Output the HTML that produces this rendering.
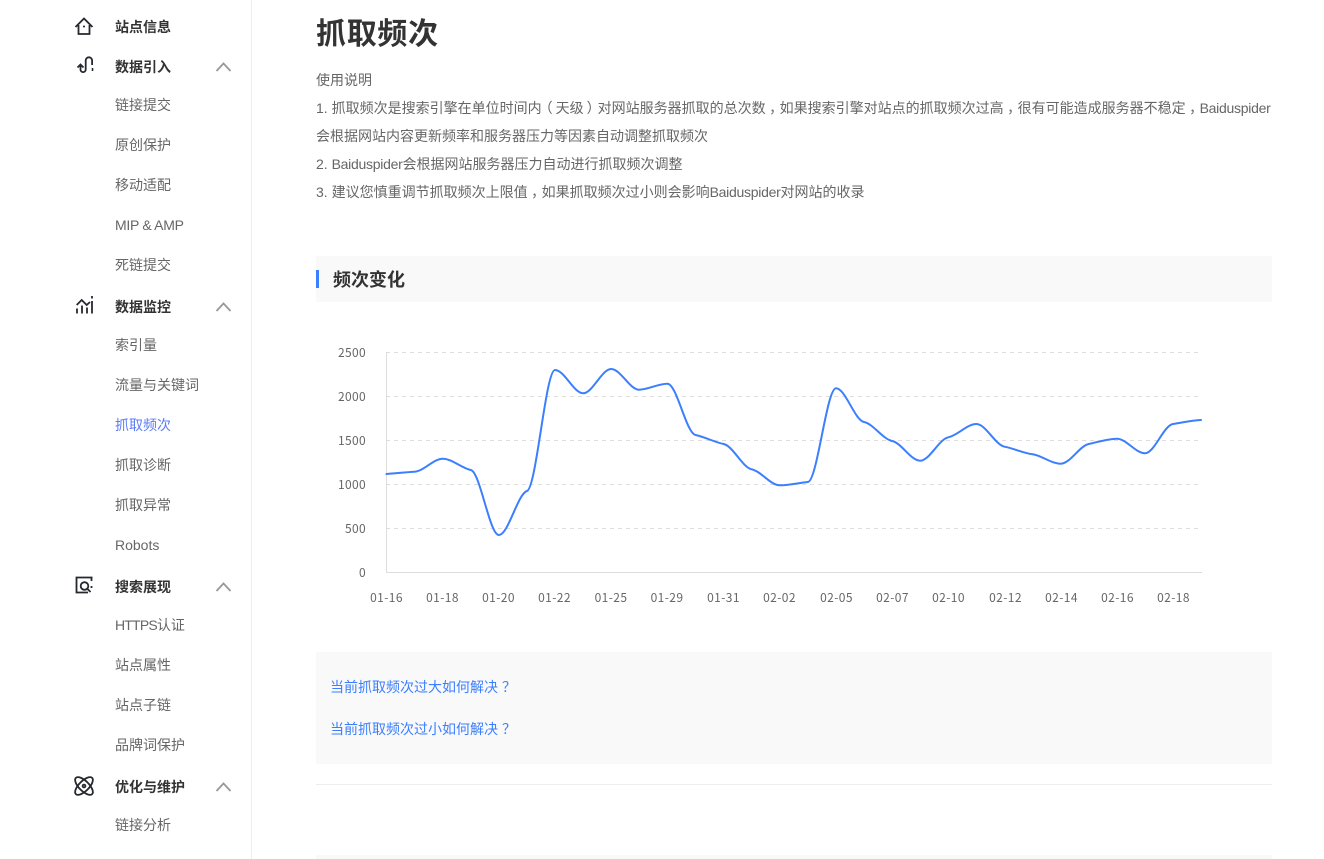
<!DOCTYPE html>
<html lang="zh">
<head>
<meta charset="utf-8">
<title>抓取频次</title>
<style>
html,body{margin:0;padding:0;background:#fff;}
body{width:1324px;height:859px;position:relative;overflow:hidden;font-family:"Liberation Sans","Noto Sans CJK SC",sans-serif;font-size:14px;color:#666;}
.a{position:absolute;white-space:nowrap;line-height:20px;}
.h{left:115px;color:#333;font-weight:bold;font-size:14px;}
.s{left:115px;color:#666;}
.d{left:316px;color:#666;}
.c{position:relative;left:3.5px;}
.q{position:relative;left:4px;}
.o{position:relative;left:-3px;}
.e{position:relative;left:3px;}
.b{letter-spacing:-.27px;}
svg{position:absolute;left:0;top:0;}
</style>
</head>
<body>
<div class="a" style="left:251px;top:0;width:1px;height:859px;background:#eee"></div>

<div class="a h" style="top:17px">站点信息</div>
<div class="a h" style="top:57px">数据引入</div>
<div class="a s" style="top:95px">链接提交</div>
<div class="a s" style="top:135px">原创保护</div>
<div class="a s" style="top:175px">移动适配</div>
<div class="a s" style="top:215px;letter-spacing:-.3px">MIP &amp; AMP</div>
<div class="a s" style="top:255px">死链提交</div>
<div class="a h" style="top:297px">数据监控</div>
<div class="a s" style="top:335px">索引量</div>
<div class="a s" style="top:375px">流量与关键词</div>
<div class="a s" style="top:415px;color:#5b7cf5">抓取频次</div>
<div class="a s" style="top:455px">抓取诊断</div>
<div class="a s" style="top:495px">抓取异常</div>
<div class="a s" style="top:535px">Robots</div>
<div class="a h" style="top:577px">搜索展现</div>
<div class="a s" style="top:615px"><span style="letter-spacing:-.8px">HTTPS</span>认证</div>
<div class="a s" style="top:655px">站点属性</div>
<div class="a s" style="top:695px">站点子链</div>
<div class="a s" style="top:735px">品牌词保护</div>
<div class="a h" style="top:777px">优化与维护</div>
<div class="a s" style="top:815px">链接分析</div>

<svg width="300" height="859" viewBox="0 0 300 859" fill="none">
  <g stroke="#26282f" stroke-width="1.8" fill="none">
    <path d="M75.5 27L84 18.5L92.5 27M78.5 25V34H89.5V25"/>
    <path d="M83 26.5h2" stroke-width="1.6"/>
    <path d="M77.5 67.5l3-3 3 3M80.5 65v4.5a2.6 2.6 0 0 0 5.2 0V60.5a3.2 3.2 0 0 1 6.4 0V65"/>
    <path d="M92.5 68v3" stroke-width="1.6"/>
    <path d="M76.7 305L81.7 300L86.7 305L90 302"/>
    <path d="M77 308.5v5M82 305.5v8M87 307.5v6M92 301v12.5M92 296v2.5"/>
    <path d="M92.5 577.5H76.5V592.5H88M91.5 577.5v3.5M91.5 586v2"/>
    <circle cx="84.5" cy="586" r="3.8"/>
    <path d="M87.5 589l3 3"/>
    <ellipse cx="84" cy="786" rx="11.5" ry="5" transform="rotate(45 84 786)"/>
    <ellipse cx="84" cy="786" rx="11.5" ry="5" transform="rotate(-45 84 786)"/>
    <circle cx="84" cy="786" r="1.4"/>
  </g>
  <g stroke="#999" stroke-width="1.8" fill="none">
    <path d="M216.5 71L223.5 63.5L230.5 71"/>
    <path d="M216.5 311L223.5 303.5L230.5 311"/>
    <path d="M216.5 591L223.5 583.5L230.5 591"/>
    <path d="M216.5 791L223.5 783.5L230.5 791"/>
  </g>
</svg>

<div class="a" style="left:316px;top:15px;font-size:30px;line-height:40px;font-weight:bold;color:#333;letter-spacing:.7px">抓取频次</div>
<div class="a d" style="top:70px">使用说明</div>
<div class="a d" style="top:98px">1. 抓取频次是搜索引擎在单位时间内<span class="o">（</span>天级<span class="e">）</span>对网站服务器抓取的总次数<span class="c">，</span>如果搜索引擎对站点的抓取频次过高<span class="c">，</span>很有可能造成服务器不稳定<span class="c">，</span><span class="b">Baiduspider</span></div>
<div class="a d" style="top:126px">会根据网站内容更新频率和服务器压力等因素自动调整抓取频次</div>
<div class="a d" style="top:154px">2. <span class="b">Baiduspider</span>会根据网站服务器压力自动进行抓取频次调整</div>
<div class="a d" style="top:182px">3. 建议您慎重调节抓取频次上限值<span class="c">，</span>如果抓取频次过小则会影响<span class="b">Baiduspider</span>对网站的收录</div>

<div class="a" style="left:316px;top:256px;width:956px;height:46px;background:#f9f9f9"></div>
<div class="a" style="left:316px;top:270px;width:3px;height:18px;background:#3b7fff"></div>
<div class="a" style="left:333px;top:268px;font-size:18px;line-height:24px;font-weight:bold;color:#333">频次变化</div>

<svg width="1324" height="859" viewBox="0 0 1324 859" fill="none">
  <g stroke="#ddd" stroke-width="1" stroke-dasharray="4 4">
    <path d="M386 352.5H1198M386 396.5H1198M386 440.5H1198M386 484.5H1198M386 528.5H1198"/>
  </g>
  <path d="M386.5 352V572.5H1202" stroke="#ddd" stroke-width="1"/>
  <path stroke="#3b7fff" stroke-width="2" stroke-linecap="round" stroke-linejoin="round" d="M386.5 474C395.9 473.4 405.2 472.2 414.6 471.7C424 471.2 433.3 458.7 442.7 458.7C452.1 458.7 461.4 468.1 470.8 470C480.2 471.9 489.5 535 498.9 535C508.3 535 517.6 493.8 527 491C536.4 488.2 545.6 370 555 370C564.4 370 573.7 393.3 583.1 393.3C592.5 393.3 601.8 369 611.2 369C620.6 369 629.9 390 639.3 389.7C648.7 389.4 658 383.7 667.4 383.7C676.8 383.7 686.1 433.1 695.5 435C704.9 436.9 714.2 442.1 723.6 444C733 445.9 742.3 467.4 751.7 469.3C761.1 471.2 770.4 485.3 779.8 485.3C789.2 485.3 798.5 482.9 807.9 482C817.3 481.1 826.6 388.3 836 388.3C845.4 388.3 854.6 420.1 864 422C873.4 423.9 882.7 439.1 892.1 441C901.5 442.9 910.8 460.7 920.2 460.7C929.6 460.7 938.9 439.2 948.3 437.3C957.7 435.4 967 424 976.4 424C985.8 424 995.1 444.8 1004.5 446.7C1013.9 448.6 1023.2 452.9 1032.6 454.3C1042 455.7 1051.3 463.7 1060.7 463.7C1070.1 463.7 1079.4 445.9 1088.8 444C1098.2 442.1 1107.5 438.7 1116.9 438.7C1126.3 438.7 1135.6 453.3 1145 453.3C1154.4 453.3 1163.6 425.4 1173 424C1182.4 422.6 1191.6 420.3 1201 420"/>
  <g fill="#666" font-size="12" letter-spacing=".35" font-family="'Noto Sans CJK SC','Liberation Sans',sans-serif" text-anchor="end">
    <text x="366" y="357">2500</text>
    <text x="366" y="401">2000</text>
    <text x="366" y="445">1500</text>
    <text x="366" y="489">1000</text>
    <text x="366" y="533">500</text>
    <text x="366" y="577">0</text>
  </g>
  <g fill="#666" font-size="12" letter-spacing=".4" font-family="'Noto Sans CJK SC','Liberation Sans',sans-serif" text-anchor="middle">
    <text x="386.5" y="602">01-16</text>
    <text x="442.5" y="602">01-18</text>
    <text x="498.5" y="602">01-20</text>
    <text x="554.5" y="602">01-22</text>
    <text x="611" y="602">01-25</text>
    <text x="667" y="602">01-29</text>
    <text x="723.5" y="602">01-31</text>
    <text x="779.5" y="602">02-02</text>
    <text x="836.5" y="602">02-05</text>
    <text x="892.5" y="602">02-07</text>
    <text x="948.5" y="602">02-10</text>
    <text x="1005.5" y="602">02-12</text>
    <text x="1061.5" y="602">02-14</text>
    <text x="1117.5" y="602">02-16</text>
    <text x="1173.5" y="602">02-18</text>
  </g>
</svg>

<div class="a" style="left:316px;top:652px;width:956px;height:112px;background:#f9f9f9"></div>
<div class="a" style="left:330px;top:677px;color:#3b7fff">当前抓取频次过大如何解决<span class="q">？</span></div>
<div class="a" style="left:330px;top:719px;color:#3b7fff">当前抓取频次过小如何解决<span class="q">？</span></div>
<div class="a" style="left:316px;top:784px;width:956px;height:1px;background:#eee"></div>
<div class="a" style="left:316px;top:855px;width:956px;height:4px;background:#f9f9f9"></div>
</body>
</html>
